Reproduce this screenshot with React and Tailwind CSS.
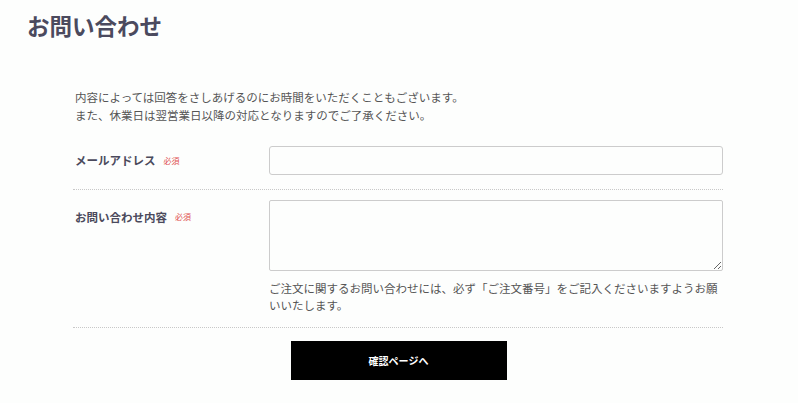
export default function App() {
  const font = { fontFamily: '"Noto Sans CJK JP", "Noto Sans", sans-serif' };
  return (
    <div style={font} className="min-h-[403px] w-[798px] bg-[#fdfefd] text-[#4b4a5c]">
      {/* Title */}
      <h1 className="pl-[27px] pt-[9px] text-[22.5px] font-bold leading-[32px] text-[#4b4a5e]">
        お問い合わせ
      </h1>

      <div className="ml-[73px] mt-[47px] w-[650px]">
        {/* Notice */}
        <p className="pl-[2px] text-[11.5px] leading-[18px] text-[#555]">
          内容によっては回答をさしあげるのにお時間をいただくこともございます。
          <br />
          また、休業日は翌営業日以降の対応となりますのでご了承ください。
        </p>

        {/* Email */}
        <div className="mt-[22px] flex border-b border-dotted border-[#c8c8c8] pb-[14px]">
          <div className="flex w-[196px] items-center gap-[8px] pl-[2px]">
            <span className="text-[11.5px] font-bold">メールアドレス</span>
            <span className="text-[8px] text-[#e05050]">必須</span>
          </div>
          <input
            type="text"
            className="h-[29px] flex-1 rounded-[3px] border border-[#cccccc] bg-[#fdfefd] outline-none"
          />
        </div>

        {/* Message */}
        <div className="flex border-b border-dotted border-[#c8c8c8] pt-[10px] pb-[13px]">
          <div className="flex w-[196px] items-start gap-[8px] pl-[2px] pt-[8px]">
            <span className="text-[11.5px] font-bold leading-[18px]">お問い合わせ内容</span>
            <span className="text-[8px] leading-[18px] text-[#e05050]">必須</span>
          </div>
          <div className="flex-1">
            <textarea className="block h-[71px] w-full rounded-[2px] border border-[#cccccc] bg-[#fdfefd] outline-none" />
            <p className="mt-[9px] text-[11.5px] leading-[17px] text-[#555]">
              ご注文に関するお問い合わせには、必ず「ご注文番号」をご記入くださいますようお願いいたします。
            </p>
          </div>
        </div>

        {/* Submit */}
        <div className="mt-[13px] flex justify-center">
          <button className="ml-[1px] h-[39px] w-[216px] bg-black text-[10px] font-bold text-white">
            確認ページへ
          </button>
        </div>
      </div>
    </div>
  );
}
